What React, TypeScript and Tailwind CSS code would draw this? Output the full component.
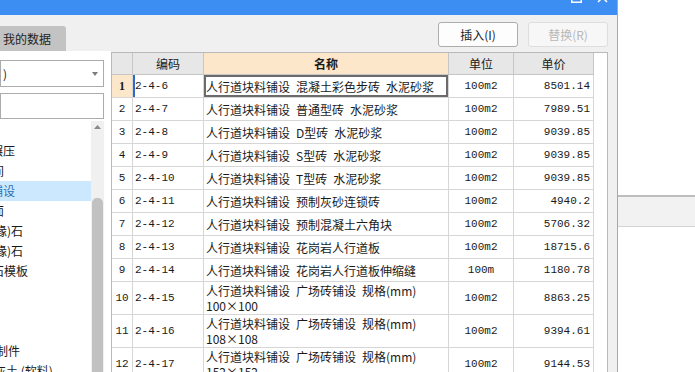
const rows = [
  { n: 1, code: '2-4-6', name: ['人行道块料铺设 混凝土彩色步砖 水泥砂浆'], unit: '100m2', price: '8501.14' },
  { n: 2, code: '2-4-7', name: ['人行道块料铺设 普通型砖 水泥砂浆'], unit: '100m2', price: '7989.51' },
  { n: 3, code: '2-4-8', name: ['人行道块料铺设 D型砖 水泥砂浆'], unit: '100m2', price: '9039.85' },
  { n: 4, code: '2-4-9', name: ['人行道块料铺设 S型砖 水泥砂浆'], unit: '100m2', price: '9039.85' },
  { n: 5, code: '2-4-10', name: ['人行道块料铺设 T型砖 水泥砂浆'], unit: '100m2', price: '9039.85' },
  { n: 6, code: '2-4-11', name: ['人行道块料铺设 预制灰砂连锁砖'], unit: '100m2', price: '4940.2' },
  { n: 7, code: '2-4-12', name: ['人行道块料铺设 预制混凝土六角块'], unit: '100m2', price: '5706.32' },
  { n: 8, code: '2-4-13', name: ['人行道块料铺设 花岗岩人行道板'], unit: '100m2', price: '18715.6' },
  { n: 9, code: '2-4-14', name: ['人行道块料铺设 花岗岩人行道板伸缩缝'], unit: '100m', price: '1180.78' },
  { n: 10, code: '2-4-15', name: ['人行道块料铺设 广场砖铺设 规格(mm)', '100×100'], unit: '100m2', price: '8863.25' },
  { n: 11, code: '2-4-16', name: ['人行道块料铺设 广场砖铺设 规格(mm)', '108×108'], unit: '100m2', price: '9394.61' },
  { n: 12, code: '2-4-17', name: ['人行道块料铺设 广场砖铺设 规格(mm)', '152×152'], unit: '100m2', price: '9144.53' },
];

// tree is scrolled sideways, so only the tail of each label shows
const tree = [
  { t: '', m: '' },
  { t: '碾压', m: 'ml-[-9px]' },
  { t: '中间', m: 'ml-[-20px]' },
  { t: '铺设', m: 'ml-[-9px]', sel: true },
  { t: '路面', m: 'ml-[-20px]' },
  { t: '缘)石', m: 'ml-[-5px]' },
  { t: '缘)石', m: 'ml-[-5px]' },
  { t: '石模板', m: 'ml-[-8px]' },
  { t: '', m: '' },
  { t: '', m: '' },
  { t: '', m: '' },
  { t: '预制件', m: 'ml-[-16px]' },
  { t: '灰土 (软料)', m: 'ml-[-6px]' },
];

const mono = "font-['Liberation_Mono',monospace] text-[11px]";

const LeftPanel = () => (
  <div className="w-[111px] bg-white flex flex-col pr-[7px] pt-[9px] overflow-hidden">
    <div className="h-[27px] border border-[#acacac] flex items-center justify-between pl-[2px] pr-[5px]">
      <span className="text-[12px]">)</span>
      <svg width="6" height="4" viewBox="0 0 6 4"><path d="M0 0h6L3 4z" fill="#7c7c7c" /></svg>
    </div>
    <div className="h-[26px] border border-[#acacac] mt-[6px]" />
    <div className="flex-1 flex mt-[2px] min-h-0">
      <div className="flex-1 flex flex-col overflow-hidden">
        {tree.map((it, i) => (
          <div key={i} className={`h-[20px] shrink-0 flex items-center whitespace-pre leading-[20px] ${it.sel ? 'bg-[#cce8ff] text-[#2a6db5]' : ''}`}>
            <span className={it.m}>{it.t}</span>
          </div>
        ))}
      </div>
      <div className="w-[13px] bg-[#f0f0f0] flex flex-col items-center">
        <svg width="7" height="4" viewBox="0 0 7 4" className="mt-[4px]"><path d="M0 4h7L3.5 0z" fill="#8a8a8a" /></svg>
        <div className="mt-[69px] w-[11px] flex-1 bg-[#c1c1c1] rounded-t-[5px]" />
      </div>
    </div>
  </div>
);

const Grid = () => (
  <div className="h-full border-l border-t border-r border-[#b9b9b9] bg-white overflow-hidden">
    <div className="w-[482px] h-[22px] flex border-b border-[#c6c6c6] bg-[#e7e7e7]">
      <div className="w-[21px] border-r border-[#c6c6c6]" />
      <div className="w-[71px] border-r border-[#c6c6c6] flex items-center justify-center">编码</div>
      <div className="w-[245px] border-r border-[#c6c6c6] flex items-center justify-center bg-[#fde7ca] font-bold">名称</div>
      <div className="w-[65px] border-r border-[#c6c6c6] flex items-center justify-center">单位</div>
      <div className="w-[80px] border-r border-[#c6c6c6] flex items-center justify-center">单价</div>
    </div>
    {rows.map((r) => {
      const first = r.n === 1;
      return (
        <div key={r.n} className={`w-[482px] flex border-b border-[#d6d6d6] ${r.name.length > 1 ? 'h-[33px]' : 'h-[23px]'}`}>
          <div className={`w-[21px] border-r border-[#d6d6d6] flex items-center justify-center ${first ? "bg-[#fde7ca] font-['Liberation_Serif',serif] font-bold text-[12px]" : mono}`}>{r.n}</div>
          <div className={`w-[71px] border-r border-[#d6d6d6] flex items-center pl-[2px] ${mono} ${first ? 'shadow-[inset_2px_0_0_#3069c9]' : ''}`}>{r.code}</div>
          <div className={`w-[245px] border-r border-[#d6d6d6] flex flex-col justify-center pl-[2px] leading-[15px] whitespace-pre ${first ? 'shadow-[inset_0_0_0_2px_#6b6b6b]' : ''}`}>
            {r.name.map((l, i) => <span key={i}>{l.replace(/ /g, '\u2002')}</span>)}
          </div>
          <div className={`w-[65px] border-r border-[#d6d6d6] flex items-center justify-center ${mono}`}>{r.unit}</div>
          <div className={`w-[80px] border-r border-[#d6d6d6] flex items-center justify-end pr-[3px] ${mono}`}>{r.price}</div>
        </div>
      );
    })}
  </div>
);

export default function App() {
  return (
    <div className="w-[695px] h-[372px] overflow-hidden flex bg-white font-['Noto_Sans_CJK_SC',sans-serif] text-[12px] text-[#1a1a1a]">
      <div className="w-[618px] h-full flex flex-col border-r border-[#a8a8a8] bg-[#f0f0f0]">
        <div className="h-[15px] shrink-0 bg-[#3c8ef3] flex justify-end items-start gap-[15px] pr-[9px] overflow-hidden">
          <svg width="11" height="11" viewBox="0 0 11 11" className="mt-[-8px]"><rect x="0.75" y="0.75" width="9.5" height="9.5" fill="none" stroke="#fff" strokeWidth="1.5" /></svg>
          <svg width="11" height="11" viewBox="0 0 11 11" className="mt-[-8px]"><path d="M1 1l9 9M10 1l-9 9" stroke="#fff" strokeWidth="1.5" /></svg>
        </div>
        <div className="h-[36px] shrink-0 flex justify-between pr-[9px]">
          <div className="self-end h-[25px] w-[66px] bg-[#c3c3c3] rounded-tr-[3px] flex items-center pl-[3px] text-[#222]">我的数据</div>
          <div className="mt-[7px] flex gap-[10px]">
            <button className="w-[80px] h-[25px] rounded-[3px] border border-[#adadad] bg-[#fdfdfd] text-[#222] text-[12px]">插入(I)</button>
            <button className="w-[80px] h-[25px] rounded-[3px] border border-[#dedede] bg-[#f7f7f7] text-[#b8b8b8] text-[12px]">替换(R)</button>
          </div>
        </div>
        <div className="flex-1 flex min-h-0">
          <LeftPanel />
          <div className="flex-1 pt-[1px] pr-[9px] min-w-0">
            <Grid />
          </div>
        </div>
      </div>
      <div className="flex-1 flex flex-col">
        <div className="h-[195px]" />
        <div className="h-[32px] bg-[#f2f2f2] border-t-2 border-t-[#bdbdbd] border-b border-b-[#d4d4d4]" />
      </div>
    </div>
  );
}
